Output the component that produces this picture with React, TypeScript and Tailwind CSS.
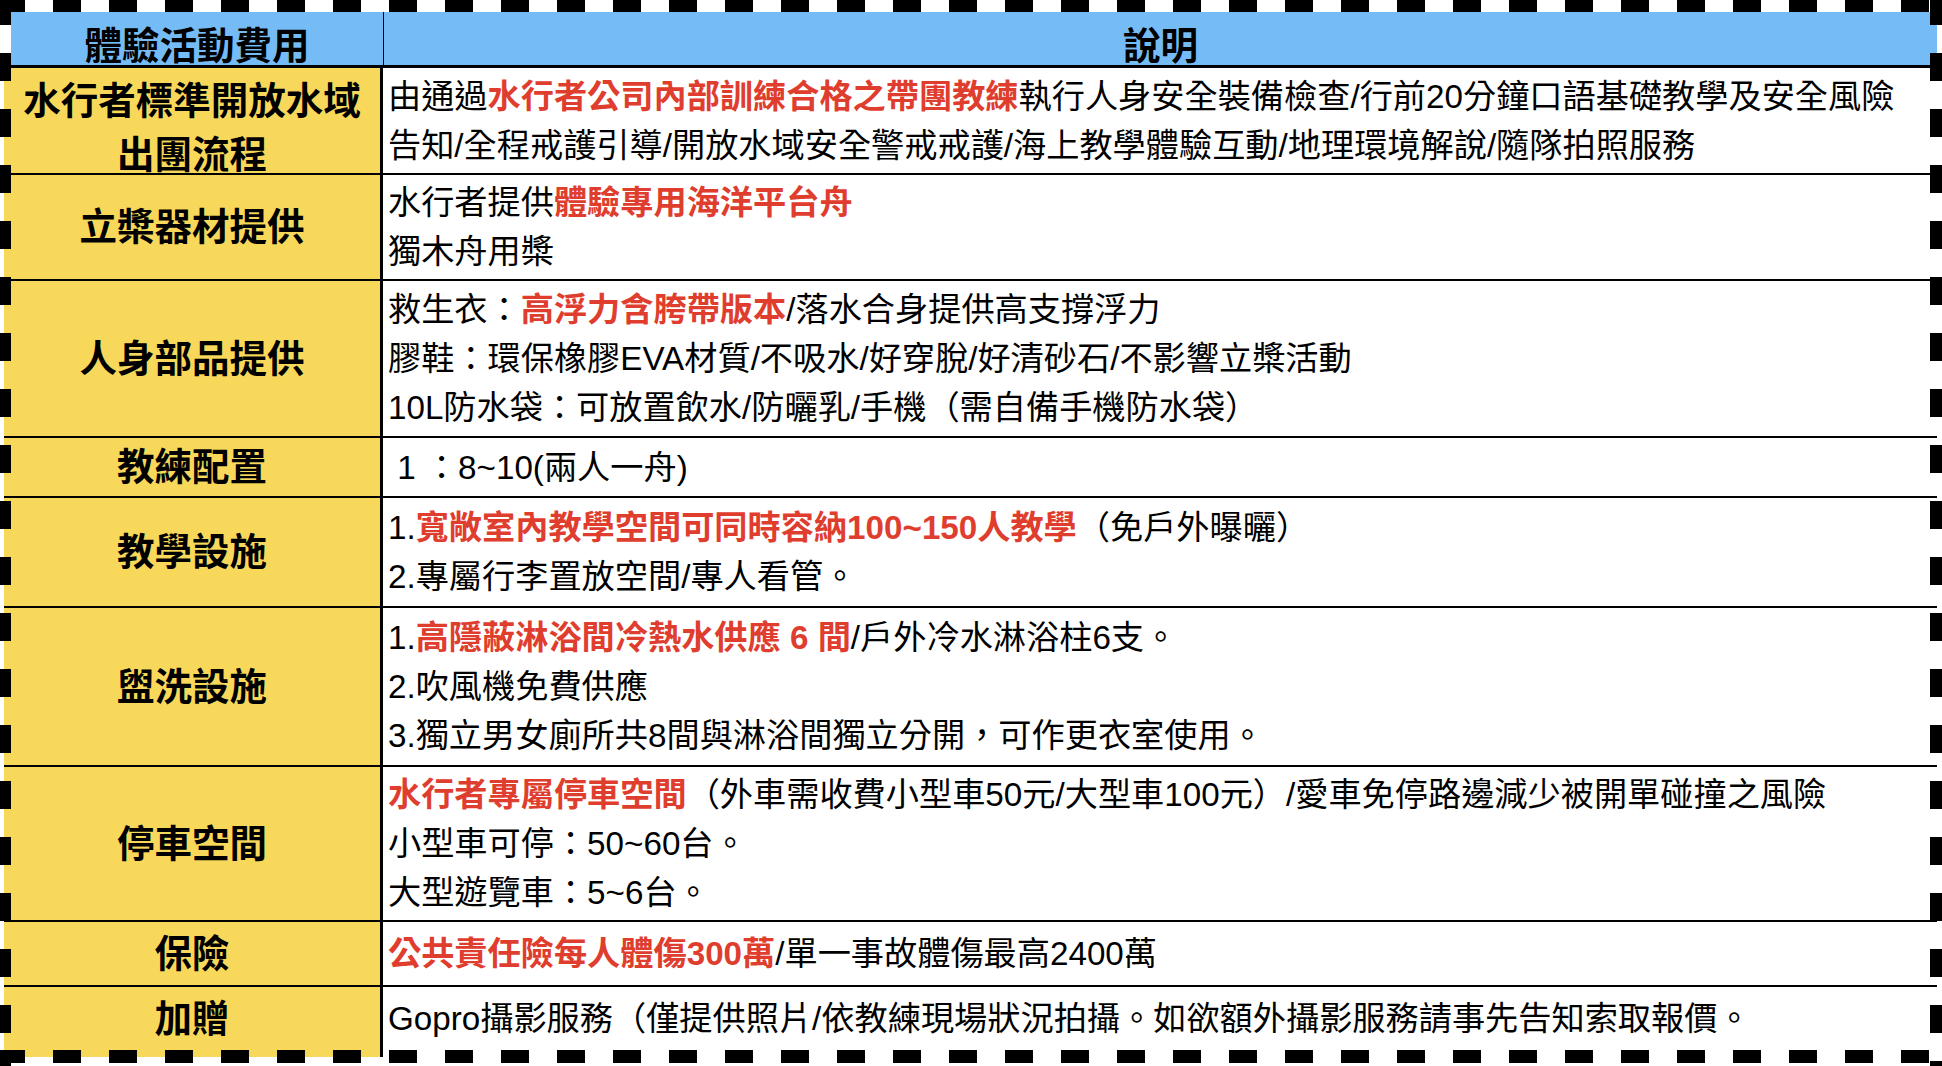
import React from "react";

type Seg = [string, boolean?];

type Row = {
  label: string[];
  h: string;
  labelPad?: string;
  lines: Seg[][];
  border?: boolean;
};

const rows: Row[] = [
  {
    label: ["水行者標準開放水域", "出團流程"],
    h: "h-[107px]",
    labelPad: "pt-[14px]",
    lines: [
      [
        ["由通過"],
        ["水行者公司內部訓練合格之帶團教練", true],
        ["執行人身安全裝備檢查/行前20分鐘口語基礎教學及安全風險"],
      ],
      [["告知/全程戒護引導/開放水域安全警戒戒護/海上教學體驗互動/地理環境解說/隨隊拍照服務"]],
    ],
  },
  {
    label: ["立槳器材提供"],
    h: "h-[106px]",
    lines: [
      [["水行者提供"], ["體驗專用海洋平台舟", true]],
      [["獨木舟用槳"]],
    ],
  },
  {
    label: ["人身部品提供"],
    h: "h-[157px]",
    lines: [
      [["救生衣："], ["高浮力含胯帶版本", true], ["/落水合身提供高支撐浮力"]],
      [["膠鞋：環保橡膠EVA材質/不吸水/好穿脫/好清砂石/不影響立槳活動"]],
      [["10L防水袋：可放置飲水/防曬乳/手機（需自備手機防水袋）"]],
    ],
  },
  {
    label: ["教練配置"],
    h: "h-[60px]",
    lines: [[["\u00a01 ：8~10(兩人一舟)"]]],
  },
  {
    label: ["教學設施"],
    h: "h-[110px]",
    lines: [
      [["1."], ["寬敞室內教學空間可同時容納100~150人教學", true], ["（免戶外曝曬）"]],
      [["2.專屬行李置放空間/專人看管。"]],
    ],
  },
  {
    label: ["盥洗設施"],
    h: "h-[159px]",
    lines: [
      [["1."], ["高隱蔽淋浴間冷熱水供應 6 間", true], ["/戶外冷水淋浴柱6支。"]],
      [["2.吹風機免費供應"]],
      [["3.獨立男女廁所共8間與淋浴間獨立分開，可作更衣室使用。"]],
    ],
  },
  {
    label: ["停車空間"],
    h: "h-[155px]",
    lines: [
      [
        ["水行者專屬停車空間", true],
        ["（外車需收費小型車50元/大型車100元）/愛車免停路邊減少被開單碰撞之風險"],
      ],
      [["小型車可停：50~60台。"]],
      [["大型遊覽車：5~6台。"]],
    ],
  },
  {
    label: ["保險"],
    h: "h-[65px]",
    lines: [[["公共責任險每人體傷300萬", true], ["/單一事故體傷最高2400萬"]]],
  },
  {
    label: ["加贈"],
    h: "h-[70px]",
    labelPad: "pb-[7px]",
    border: false,
    lines: [[["Gopro攝影服務（僅提供照片/依教練現場狀況拍攝。如欲額外攝影服務請事先告知索取報價。"]]],
  },
];

function DashFrame() {
  return (
    <svg
      className="absolute inset-0 pointer-events-none"
      width="1942"
      height="1066"
      viewBox="0 0 1942 1066"
    >
      <g stroke="#000" fill="none" strokeDasharray="28 28" strokeDashoffset="3">
        <line x1="0" y1="6" x2="1942" y2="6" strokeWidth="12" />
        <line x1="0" y1="1056.5" x2="1942" y2="1056.5" strokeWidth="13" />
        <line x1="5.5" y1="0" x2="5.5" y2="1066" strokeWidth="11" />
        <line x1="1936" y1="0" x2="1936" y2="1066" strokeWidth="12" />
      </g>
    </svg>
  );
}

export default function App() {
  return (
    <div className="relative w-[1942px] h-[1066px] overflow-hidden bg-white pt-[12px] pl-[4px] pr-[5px] text-black font-['Liberation_Sans','Noto_Sans_CJK_TC',sans-serif]">
      <div className="flex flex-col">
        {/* header */}
        <div className="ml-[7px] flex h-[56px] border-b-[3px] border-black bg-[#75bcf7] font-bold text-[37.5px] leading-[44px]">
          <div className="flex w-[373px] shrink-0 items-center justify-center border-r border-black pt-[15px]">
            體驗活動費用
          </div>
          <div className="flex flex-1 items-center justify-center pt-[15px]">說明</div>
        </div>
        {rows.map((r, i) => (
          <div
            key={i}
            className={`flex ${r.h} ${r.border === false ? "" : "border-b-2 border-black"}`}
          >
            <div
              className={`flex w-[379px] shrink-0 flex-col items-center justify-center border-r-[3px] border-black bg-[#f8d85a] text-center text-[37.5px] font-bold leading-[54px] ${r.labelPad ?? ""}`}
            >
              {r.label.map((l, j) => (
                <div key={j} className="whitespace-nowrap">
                  {l}
                </div>
              ))}
            </div>
            <div
              className={`flex flex-1 flex-col justify-center bg-white pl-[5px] text-[33.2px] leading-[49px] ${r.border === false ? "pb-[7px]" : ""}`}
            >
              {r.lines.map((line, j) => (
                <div key={j} className="whitespace-nowrap">
                  {line.map((s, k) =>
                    s[1] ? (
                      <span key={k} className="font-bold text-[#df3e2f]">
                        {s[0]}
                      </span>
                    ) : (
                      <span key={k}>{s[0]}</span>
                    )
                  )}
                </div>
              ))}
            </div>
          </div>
        ))}
      </div>
      <DashFrame />
    </div>
  );
}
